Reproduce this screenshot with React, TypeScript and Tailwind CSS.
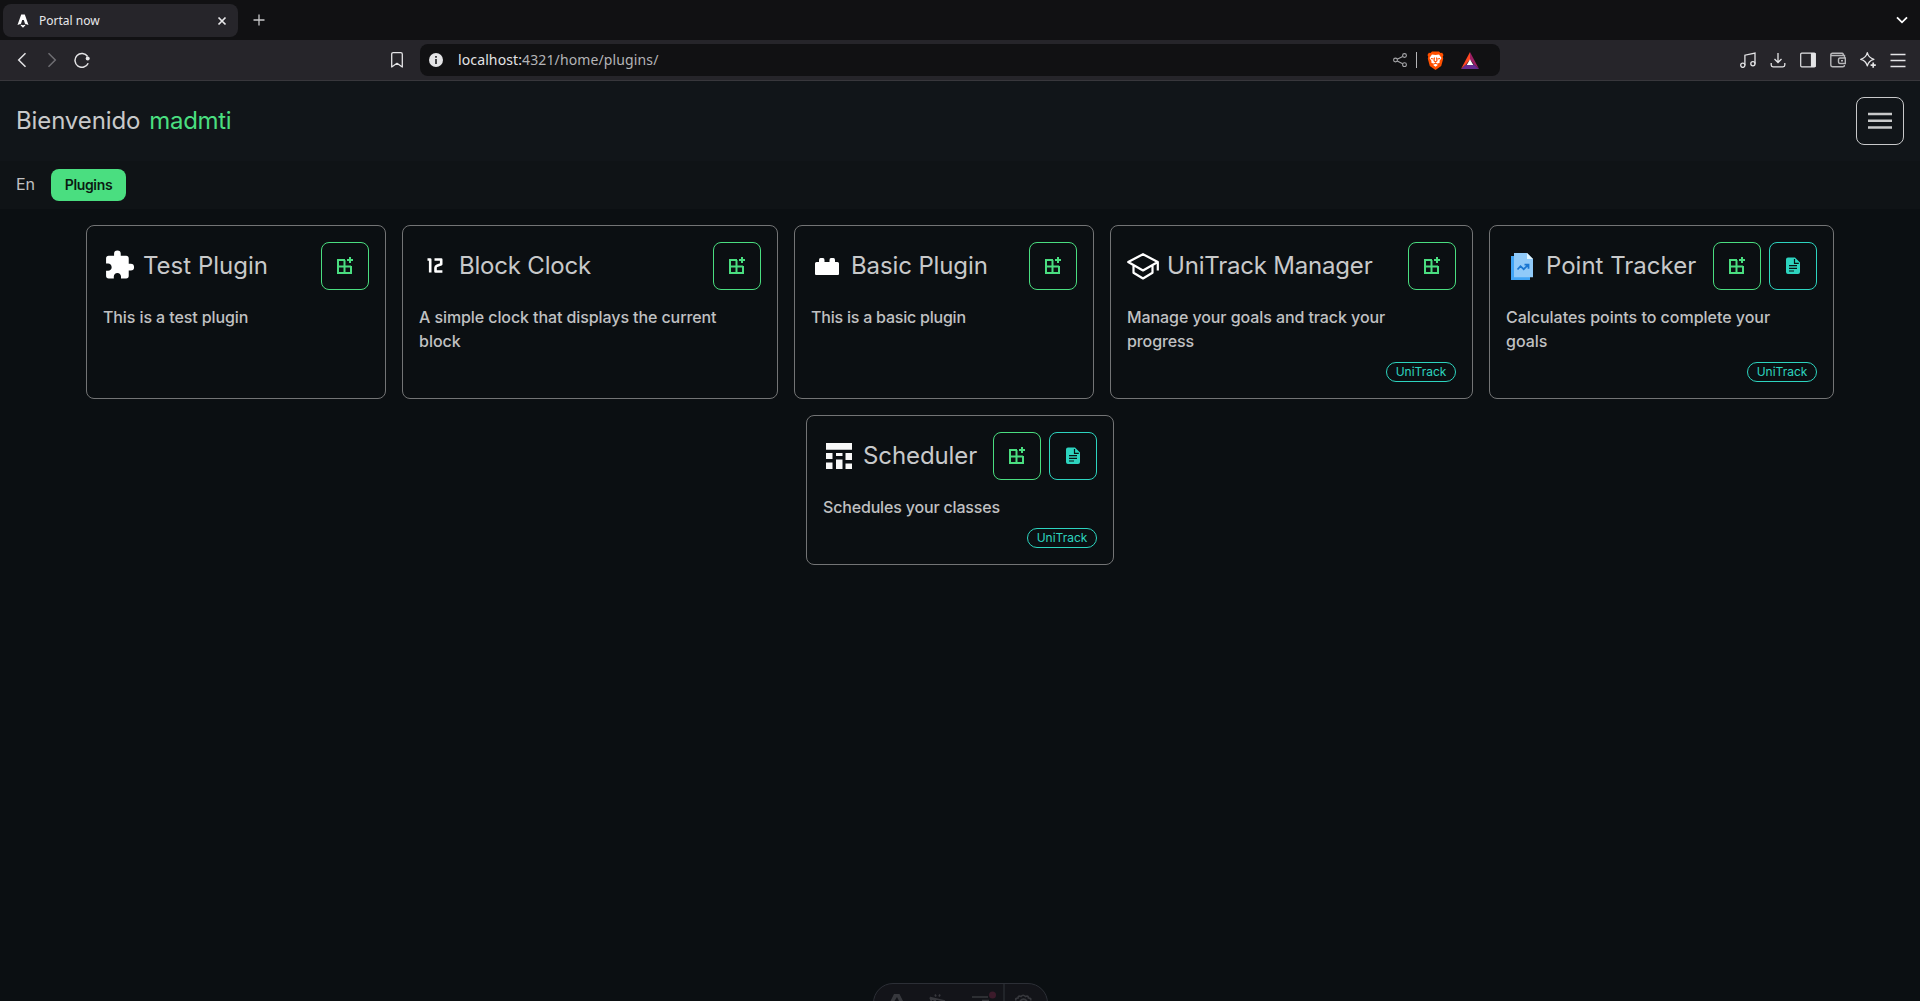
import type { ReactNode } from "react";

const uiFont = "font-['Inter','Liberation_Sans',sans-serif]";

function AddWidgetIcon() {
  return (
    <svg width="18" height="18" viewBox="0 0 18 18" fill="none" stroke="currentColor" strokeWidth="2">
      <path d="M9 3H2v13h13V9M2 9.500h13M8.500 3v13M14 0v6M11 3h6" />
    </svg>
  );
}

function FileIcon() {
  return (
    <svg width="16" height="18" viewBox="0 0 16 18" fill="none">
      <path fill="currentColor" d="M3 .5h7l5 5V15a2 2 0 0 1-2 2H3a2 2 0 0 1-2-2V2.500a2 2 0 0 1 2-2z" />
      <path stroke="#0b0f12" strokeWidth="1.200" d="M9.500 2v4.300H13.800M4 8.600h8M4 11.300h8M4 14h5" />
    </svg>
  );
}

const icons: Record<string, ReactNode> = {
  puzzle: (
    <svg width="32" height="32" viewBox="0 0 24 24" fill="#fff">
      <path d="M20.500 11H19V7a2 2 0 0 0-2-2h-4V3.500a2.500 2.500 0 0 0-5 0V5H4a2 2 0 0 0-2 2v3.800h1.500c1.500 0 2.700 1.200 2.700 2.700S5 16.200 3.500 16.200H2V20a2 2 0 0 0 2 2h3.800v-1.500c0-1.500 1.200-2.700 2.700-2.700s2.700 1.200 2.700 2.700V22H17a2 2 0 0 0 2-2v-4h1.500a2.500 2.500 0 0 0 0-5z" transform="translate(.3 -.6)" />
    </svg>
  ),
  twelve: (
    <svg width="32" height="32" viewBox="0 0 32 32" fill="none" stroke="#fff" strokeWidth="2.600" strokeLinejoin="round">
      <path d="M8.500 9.500h2.700v13M15.500 9.500h6.700v4.800L18 15.800q-1.500.500-1.500 2v3.700h6.900" />
    </svg>
  ),
  brick: (
    <svg width="32" height="32" viewBox="0 0 32 32" fill="#fff">
      <path d="M4 13.500q0-1.500 1.500-1.500H8v-2q0-2 1.500-2h2.500q1.500 0 1.500 2v2h5v-2q0-2 1.500-2h2.500q1.500 0 1.500 2v2h2.500q1.500 0 1.500 1.500V24q0 1-1 1H5q-1 0-1-1z" />
    </svg>
  ),
  cap: (
    <svg width="32" height="32" viewBox="0 0 32 32" fill="none" stroke="#fff" strokeWidth="2.200" strokeLinejoin="round">
      <path d="M16 4.200 1.200 12 16 20.500l14.800-8.500zM30.800 12v8.500M6.500 15.500v7.300l9.500 5.700 9.500-5.700v-7.300" />
    </svg>
  ),
  report: (
    <svg width="32" height="32" viewBox="0 0 32 32">
      <path fill="#42a5f5" d="M5 6h19v24H5z" />
      <path fill="#90caf9" d="M8 3h13l6 6v18.300H8z" />
      <path fill="#e1f5fe" d="M21 3v6h6z" />
      <path fill="none" stroke="#1976d2" strokeWidth="1.800" d="m11.500 19.500 3-3.300 3.200 3 4.600-4.500M18.500 14.700h4v4" />
    </svg>
  ),
  schedule: (
    <svg width="32" height="32" viewBox="0 0 32 32" fill="#f8f8f8">
      <path d="M3 3h26v6.800H3zM3 13h6.500v6H3zM13 13h6.500v3H13zM22.500 13H29v7h-6.500zM3 22.500h6.500V29H3zM13 19.500h6.500V29H13zM22.500 23.500H29V29h-6.500z" />
    </svg>
  ),
};

type Plugin = {
  name: string;
  icon: string;
  width: string;
  titleSpacing: string;
  lines: [string, string][];
  page?: boolean;
  tag?: boolean;
};

const plugins: Plugin[] = [
  { name: "Test Plugin", icon: "puzzle", width: "w-[300px]", titleSpacing: "", lines: [["This is a test plugin", "tracking-[-0.1px]"]] },
  { name: "Block Clock", icon: "twelve", width: "w-[376px]", titleSpacing: "tracking-[-0.2px]", lines: [["A simple clock that displays the current", "tracking-[-0.09px]"], ["block", ""]] },
  { name: "Basic Plugin", icon: "brick", width: "w-[300px]", titleSpacing: "tracking-[-0.12px]", lines: [["This is a basic plugin", "tracking-[-0.22px]"]] },
  { name: "UniTrack Manager", icon: "cap", width: "w-[363px]", titleSpacing: "tracking-[-0.2px]", lines: [["Manage your goals and track your", "tracking-[-0.08px]"], ["progress", "tracking-[-0.1px]"]], tag: true },
  { name: "Point Tracker", icon: "report", width: "w-[345px]", titleSpacing: "", lines: [["Calculates points to complete your", "tracking-[-0.02px]"], ["goals", ""]], page: true, tag: true },
  { name: "Scheduler", icon: "schedule", width: "w-[308px]", titleSpacing: "tracking-[-0.1px]", lines: [["Schedules your classes", "tracking-[-0.17px]"]], page: true, tag: true },
];

function PluginCard({ plugin }: { plugin: Plugin }) {
  return (
    <article className={`flex shrink-0 flex-col rounded-lg border border-[#737475] p-4 ${plugin.width}`}>
      <header className="flex items-center gap-2">
        {icons[plugin.icon]}
        <h2 className={`grow whitespace-nowrap text-2xl ${plugin.titleSpacing}`}>{plugin.name}</h2>
        <button className="flex size-12 shrink-0 items-center justify-center rounded-lg border border-[#4ade80] text-[#4ade80]">
          <AddWidgetIcon />
        </button>
        {plugin.page && (
          <button className="flex size-12 shrink-0 items-center justify-center rounded-lg border border-[#2dd4bf] text-[#2dd4bf]">
            <FileIcon />
          </button>
        )}
      </header>
      <div className="mt-[15px] pb-px text-base font-medium text-[#c0c1c2]">
        {plugin.lines.map(([text, spacing]) => (
          <p key={text} className={`whitespace-nowrap ${spacing}`}>{text}</p>
        ))}
      </div>
      {plugin.tag && (
        <span className="mt-2 flex h-5 w-[70px] items-center justify-center self-end rounded-full border border-[#2dd4bf] text-xs text-[#2dd4bf]">
          UniTrack
        </span>
      )}
    </article>
  );
}

function TabStrip() {
  return (
    <div className="flex h-10 items-center bg-[#111113] pl-[3px] text-[#e8e8ea]">
      <div className="mt-px flex h-[33px] w-[235px] items-center rounded-lg bg-[#26252a] pl-[14px] pr-[11px]">
        <svg width="12" height="14" viewBox="0 0 12 14" fill="#fff">
          <path d="M4.200.500h3.600L11.500 11 8 9.700 6 3.500 4 9.700.500 11zM3.600 10.600c1.500.700 3.300.700 4.800 0 0 1.500-1 1.600-2.400 3.200-1.400-1.600-2.400-1.700-2.400-3.200z" />
          <path d="M4.800 2h2.400l.8 4H4z" />
        </svg>
        <span className="ml-[10px] grow text-xs">Portal now</span>
        <svg width="10" height="10" viewBox="0 0 10 10" stroke="currentColor" strokeWidth="1.700">
          <path d="m1.500 1.500 7 7m0-7-7 7" />
        </svg>
      </div>
      <svg className="ml-[15px]" width="12" height="12" viewBox="0 0 12 12" stroke="#c8c8ca" strokeWidth="1.300">
        <path d="M6 .5v11M.5 6h11" />
      </svg>
      <svg className="ml-auto mr-3" width="12" height="10" viewBox="0 0 12 10" fill="none" stroke="#fff" strokeWidth="1.800">
        <path d="m1 2.300 5 5 5-5" />
      </svg>
    </div>
  );
}

function Toolbar() {
  return (
    <div className="flex h-[41px] items-center border-b border-[#38373c] bg-[#26252a] text-[#e4e4e6]">
      <svg className="ml-4" width="12" height="16" viewBox="0 0 12 16" fill="none" stroke="currentColor" strokeWidth="1.500">
        <path d="M9.500 1.200 2.700 8l6.800 6.800" />
      </svg>
      <svg className="ml-[18px]" width="12" height="16" viewBox="0 0 12 16" fill="none" stroke="#6f6e73" strokeWidth="1.500">
        <path d="M2.500 1.200 9.300 8l-6.800 6.800" />
      </svg>
      <svg className="ml-[15px]" width="18" height="16" viewBox="0 0 18 16" fill="none" stroke="currentColor" strokeWidth="1.500">
        <path d="M15.200 11.200A6.900 6.900 0 1 1 14.600 4.500" />
        <circle cx="14.700" cy="6.400" r="2" fill="currentColor" stroke="none" />
      </svg>
      <svg className="ml-[300px]" width="12" height="16" viewBox="0 0 12 16" fill="none" stroke="currentColor" strokeWidth="1.300" strokeLinejoin="round">
        <path d="M.7 2.200Q.7.700 2.200.700h7.600q1.500 0 1.500 1.500V15L6 11.300.7 15z" />
      </svg>
      <div className="ml-[17px] flex h-8 w-[1080px] items-center rounded-lg bg-[#111113] pl-[9px]">
        <svg width="14" height="14" viewBox="0 0 14 14">
          <circle cx="7" cy="7" r="7" fill="#e4e4e6" />
          <path stroke="#111113" strokeWidth="1.500" d="M7 3v1.700M7 6v5" />
        </svg>
        <span className="ml-[15px] grow text-sm tracking-[0.12px] text-[#b4b4b7]"><span className="text-[#e4e4e6]">localhost:</span>4321/home/plugins/</span>
        <svg width="14" height="14" viewBox="0 0 14 14" fill="none" stroke="#a7a7aa" strokeWidth="1.100">
          <circle cx="2.500" cy="7" r="1.900" />
          <circle cx="11.500" cy="2.500" r="1.900" />
          <circle cx="11.500" cy="11.700" r="1.900" />
          <path d="m4.200 6.200 5.500-2.800M4.200 8l5.500 2.700" />
        </svg>
        <div className="ml-[9px] h-4 w-px bg-[#b4b4b7]" />
        <svg className="ml-[10px]" width="17" height="19" viewBox="0 0 17 19">
          <path fill="#ff5000" d="M5 .500h7L13.500 2l1.700-.200 1.300 2.200-.700 1.500.400 2.200-2 7.300-5.700 4-5.700-4-2-7.300.400-2.200L.500 4l1.300-2.200L3.500 2z" />
          <path fill="#fff" d="M5 3.500 8.500 4l3.500-.500L14.500 7l-2 3 .3 1.500-1.800 1-.500 1.700-2 1.600-2-1.600-.5-1.700-1.800-1L4.500 10l-2-3z" />
          <path stroke="#ff5000" strokeWidth="1.100" fill="none" d="m4 7.500 2.500.500M13 7.500l-2.500.500M7.500 6.500l-.5 3.300L8.500 11l1.500-1.200-.5-3.300M6 13.300l2.500-1 2.500 1" />
        </svg>
        <svg className="ml-[17px]" width="18" height="17" viewBox="0 0 18 17">
          <path fill="#ff4724" d="M9 0 0 17l5-4.500L9 7.500z" />
          <path fill="#9e1f63" d="m9 0 9 17-5-4.500-4-5z" />
          <path fill="#662d91" d="M0 17h18l-5-4.500H5z" />
          <path fill="#fff" d="m9 7.300 3.300 5.700H5.700z" />
        </svg>
        <div className="w-[21px]" />
      </div>
      <div className="ml-auto mr-[14px] flex items-center gap-[14px]">
        <svg width="16" height="16" viewBox="0 0 16 16" fill="none" stroke="currentColor" strokeWidth="1.300">
          <circle cx="2.800" cy="13.300" r="2.100" />
          <circle cx="12.900" cy="11.700" r="2.100" />
          <path d="M4.900 13.300V3.200L15 1v10.700" />
        </svg>
        <svg width="16" height="16" viewBox="0 0 16 16" fill="none" stroke="currentColor" strokeWidth="1.300">
          <path d="M8 1v9.500M4.500 7 8 10.500 11.500 7M1.200 11v2q0 1.800 1.800 1.800h10q1.800 0 1.800-1.800v-2" />
        </svg>
        <svg width="16" height="16" viewBox="0 0 16 16" fill="none" stroke="currentColor" strokeWidth="1.200">
          <rect x=".7" y="1.200" width="14.600" height="13.600" rx="1" />
          <path fill="currentColor" d="M11.500 1.500h3.500v13h-3.500z" />
        </svg>
        <svg width="16" height="16" viewBox="0 0 16 16" fill="none" stroke="#b8b8bb" strokeWidth="1.400">
          <path d="M14.500 6V3.500H2.200Q.8 3.500.8 2.400 1 1.200 2.400 1.200h9.800q1.200 0 1.200 2.300M.8 2.500v10.300q0 2 2 2h10q1.700 0 1.700-1.800M15.300 6H10q-1.500 0-1.500 2v1.500q0 2 1.500 2h5.300zM11 8.800h2" />
        </svg>
        <svg width="16" height="16" viewBox="0 0 16 16" fill="none" stroke="currentColor" strokeWidth="1.300" strokeLinejoin="round">
          <path d="M7.300.7c.9 3.900 2.300 5.500 6.600 6.600-4.300 1.100-5.700 2.700-6.600 6.600-.9-3.900-2.300-5.500-6.600-6.600C5 6.200 6.400 4.600 7.300.7z" />
          <path d="M13.200 10.500v5.200M10.600 13.100h5.200" strokeWidth="1.700" />
        </svg>
        <svg width="16" height="16" viewBox="0 0 16 16" stroke="currentColor" strokeWidth="1.400">
          <path d="M.5 2.500h15M.5 8.500h15M.5 14.500h15" />
        </svg>
      </div>
    </div>
  );
}

function DevBar() {
  return (
    <div className="absolute left-[873px] top-[983px] flex h-10 w-[175px] rounded-full border border-[#2c2f36] bg-[#131419] text-[#37383d]">
      <svg width="173" height="17" viewBox="0 0 173 17" fill="none" stroke="currentColor" strokeWidth="1.700">
        <path fill="currentColor" stroke="none" d="m16.500 17 3.500-7h5.500L29 17h-4l-2-4-2.500 4z" />
        <path d="m56 13.500 6 3.500M56 13.500l1.500 3.500M56 13.500l15 3.500M61 10.500l1 2M66 10.500l-1 2" />
        <path d="M98 13h16M108 16.500h7" />
        <circle cx="118.500" cy="11" r="3.500" fill="#3c1b2b" stroke="none" />
        <path d="M130 0v17" stroke="#25272d" />
        <path d="M142 16.500q-1-2.500 2-2.500 0-2.500 3-1.500 2-2.500 4.500 0 3-1 3 1.500 3 0 2 2.500M146 17q3.500-3.500 7 0" />
      </svg>
    </div>
  );
}

export default function App() {
  return (
    <div className="relative flex h-[1001px] w-[1920px] flex-col overflow-hidden bg-[#0b0f12]">
      <div className="font-['Noto_Sans',sans-serif]">
        <TabStrip />
        <Toolbar />
      </div>
      <div className={`flex grow flex-col text-[#c8c9ca] ${uiFont}`}>
        <header className="flex h-20 items-center justify-between bg-[#111519] px-4">
          <h1 className="flex gap-[9px] text-2xl tracking-[-0.12px]">
            <span>Bienvenido</span>
            <span className="tracking-[-0.3px] text-[#4ade80]">madmti</span>
          </h1>
          <button className="flex size-12 items-center justify-center rounded-lg border border-[#c8c9ca]">
            <svg width="24" height="18" viewBox="0 0 24 18" stroke="currentColor" strokeWidth="2.500">
              <path d="M0 2h24M0 8.800h24M0 15.500h24" />
            </svg>
          </button>
        </header>
        <nav className="flex h-12 items-center gap-4 bg-[#0f1316] px-4">
          <span className="w-[19px] whitespace-nowrap pb-0.5 text-[#c0c1c2]">En</span>
          <span className="flex h-8 w-[75px] items-center justify-center rounded-lg bg-[#4ade80] text-sm font-semibold tracking-[-0.35px] text-[#0b1a12]">Plugins</span>
        </nav>
        <main className="flex flex-wrap justify-center gap-4 p-4">
          {plugins.map((plugin) => (
            <PluginCard key={plugin.name} plugin={plugin} />
          ))}
        </main>
      </div>
      <DevBar />
    </div>
  );
}
